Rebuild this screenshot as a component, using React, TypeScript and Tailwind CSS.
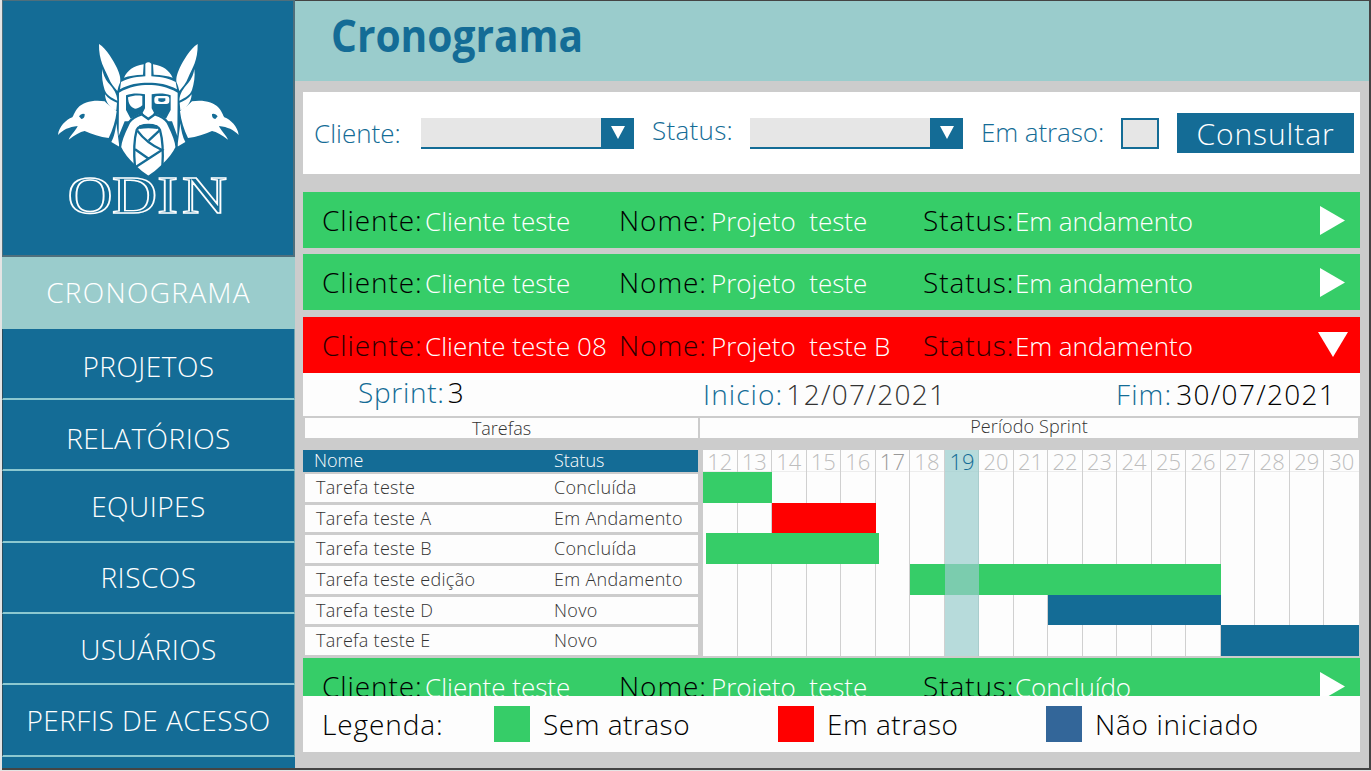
import { type ReactNode } from "react";

const SKY = "#146c96";

/* ---------- Logo ---------- */

function LogoHalf() {
  return (
    <g fill="#fff">
      <path d="M177 42C200 56 220 92 231 114C239 132 243 146 240 158C236 166 234 174 232 183C222 172 212 160 205 142C194 116 176 92 177 42Z" />
      <path d="M187 117C190 138 199 152 208 162C220 176 231 190 232 212C212 202 200 196 194 180C188 160 184 140 187 117Z" />
      <path d="M195 193C205 206 218 214 231 218L229 241C212 236 196 218 195 193Z" />
      <path d="M230 244C222 234 208 230 194 214C160 209 130 216 114 233C103 246 101 256 97 262C78 269 57 290 54 315C70 299 86 291 113 288C109 300 92 314 86 329C104 315 120 306 134 303C155 313 180 321 206 324C218 300 227 272 230 244Z" />
      <path d="M229 280L238 350L214 336C222 322 227 300 229 280Z" />
      <path d="M252 143C262 122 280 107 311 103L309 134C286 134 266 138 252 143Z" />
      <path fill={SKY} d="M117 259Q124 248 134 252Q135 266 124 267Z" />
    </g>
  );
}

function Logo() {
  return (
    <svg className="block h-[200px] w-[220px]" viewBox="0 0 660 600" aria-label="ODIN">
      <LogoHalf />
      <g transform="translate(650 0) scale(-1 1)">
        <LogoHalf />
      </g>
      <g fill="#fff">
        <path d="M240 178L243 156C268 143 296 140 316 139V101Q325 93 334 101V139C354 140 382 143 407 156L411 178C384 162 354 158 325 158C296 158 266 162 240 178Z" />
        <path d="M237 188C268 170 300 165 325 165C350 165 382 170 413 188L412 318L396 274H254L236 318Z" />
      </g>
      <g fill={SKY}>
        <path d="M258 196C275 189 298 189 315 193V235L308 248L316 262L300 252L272 266L258 240Z" />
        <path d="M392 196C375 189 352 189 335 193V235L342 248L334 262L350 252L378 266L392 240Z" />
      </g>
      <path fill="#fff" d="M264 202C280 196 295 196 307 198V226C300 233 291 236 285 236C272 233 265 222 264 202Z" />
      <rect x="343" y="198" width="45" height="24" rx="9" fill="#fff" />
      <path fill={SKY} d="M355 205H376V212Q366 219 355 213Z" />
      <path
        fill="#fff"
        stroke={SKY}
        strokeWidth="7"
        d="M325 267L305 253C290 258 276 264 268 276C256 300 242 325 240 352C250 374 266 392 284 408C296 420 310 432 325 441C340 432 354 420 366 408C384 392 400 374 410 352C408 325 394 300 382 276C374 264 360 258 345 253Z"
      />
      <g fill="none" stroke={SKY} strokeWidth="7">
        <path d="M285 412C281 370 283 325 290 300Q296 285 325 285Q354 285 360 300C367 325 370 370 367 412" />
        <path d="M292 302C308 324 334 346 366 360L286 412M358 302L326 332M285 358L326 386" />
      </g>
      <path fill={SKY} d="M298 286H352V297Q325 292 298 297Z" />
      <text
        transform="scale(1.2 1)"
        y="548"
        fontFamily="Liberation Serif, serif"
        fontSize="156"
        fill={SKY}
        stroke="#fff"
        strokeWidth="4.5"
      >
        <tspan x="69">O</tspan>
        <tspan x="180">D</tspan>
        <tspan x="293">I</tspan>
        <tspan x="355">N</tspan>
      </text>
    </svg>
  );
}

/* ---------- Sidebar ---------- */

const MENU = [
  { label: "PROJETOS", cls: "h-[71px] pt-[23px]" },
  { label: "RELATÓRIOS", cls: "h-[71px] pt-[24px]" },
  { label: "EQUIPES", cls: "h-[72px] pt-[21px]" },
  { label: "RISCOS", cls: "h-[71px] pt-[20px]" },
  { label: "USUÁRIOS", cls: "h-[71px] pt-[21px]" },
  { label: "PERFIS DE ACESSO", cls: "h-[72px] pt-[21px]" },
];

function Sidebar() {
  return (
    <aside className="flex w-[293px] shrink-0 flex-col bg-[#146c96] text-center text-[28px] leading-none tracking-[0.5px] text-white">
      <div className="h-[257px] border-t border-r-2 border-b-2 border-l border-[#4f6f7c] pt-[29px] pl-[37px]">
        <Logo />
      </div>
      <div className="h-[72px] bg-[#9acccc] pt-[21px] tracking-[1.3px]">CRONOGRAMA</div>
      {MENU.map((m) => (
        <div key={m.label} className={`border-r border-b-2 border-l border-r-[#6fa3ae] border-b-[#8cc8d0] border-l-[#2c4d5c] ${m.cls}`}>
          {m.label}
        </div>
      ))}
    </aside>
  );
}

/* ---------- Filters ---------- */

function Select() {
  return (
    <div className="flex h-[31px] w-[213px] border-b-2 border-[#146c96] bg-[#e6e6e6]">
      <div className="ml-auto flex w-[33px] justify-center bg-[#146c96] pt-2">
        <svg className="h-[13px] w-[14px]" viewBox="0 0 14 13">
          <path d="M0 0H14L7 13Z" fill="#fff" />
        </svg>
      </div>
    </div>
  );
}

function Filters() {
  return (
    <section className="flex h-[82px] bg-white text-[26px] leading-none text-[#146c96]">
      <span className="w-[118px] pt-[28px] pl-[11px]">Cliente:</span>
      <div className="pt-[26px]">
        <Select />
      </div>
      <span className="w-[116px] pt-[25px] pl-[18px] tracking-[0.3px]">Status:</span>
      <div className="pt-[26px]">
        <Select />
      </div>
      <span className="w-[158px] pt-[27px] pl-[18px] tracking-[-0.1px]">Em atraso:</span>
      <div className="mt-[26px] h-[31px] w-[38px] border-2 border-[#146c96] bg-[#e6e6e6]" />
      <button className="mt-[21px] ml-[18px] flex h-[40px] w-[177px] justify-center bg-[#146c96] pt-[6px] text-[30px] leading-none tracking-[0.9px] text-white">
        Consultar
      </button>
    </section>
  );
}

/* ---------- Projects ---------- */

type Project = { client: string; name: string; status: string; late?: boolean; open?: boolean };

function ProjectBar({ client, name, status, late, open }: Project) {
  const label = `text-[28px] tracking-[0.9px] ${late ? "text-[#2b0000]" : "text-black"}`;
  const value = "pt-[2px] text-[26px] text-white whitespace-pre";
  return (
    <div
      className={`grid h-[56px] shrink-0 grid-cols-[103px_194px_92px_212px_92px_302px_1fr] pt-[14px] pl-[19px] leading-none ${
        late ? "bg-[#ff0000]" : "bg-[#36cd68]"
      }`}
    >
      <span className={label}>Cliente:</span>
      <span className={value}>{client}</span>
      <span className={label}>Nome:</span>
      <span className={value}>{name}</span>
      <span className={label}>Status:</span>
      <span className={`${value} tracking-[-0.1px]`}>{status}</span>
      <svg className="-ml-px h-[30px] w-[32px]" viewBox="0 0 32 30">
        <path d={open ? "M2 1H32L17 26Z" : "M4 0V29L29 14.5Z"} fill="#fff" />
      </svg>
    </div>
  );
}

/* ---------- Sprint ---------- */

const TASKS = [
  ["Tarefa teste", "Concluída"],
  ["Tarefa teste A", "Em Andamento"],
  ["Tarefa teste B", "Concluída"],
  ["Tarefa teste edição", "Em Andamento"],
  ["Tarefa teste D", "Novo"],
  ["Tarefa teste E", "Novo"],
];

const BARS = [
  "row-start-1 col-start-1 col-span-2 bg-[#36cd68]",
  "row-start-2 col-start-3 col-span-3 bg-[#ff0000]",
  "row-start-3 col-start-1 col-span-5 bg-[#36cd68] ml-[3px] -mr-[3px]",
  "row-start-4 col-start-7 col-span-9 bg-[#36cd68]",
  "row-start-5 col-start-11 col-span-5 bg-[#146c96]",
  "row-start-6 col-start-16 col-span-4 bg-[#146c96]",
];

const TODAY = 19;
const DAYS = Array.from({ length: 19 }, (_, i) => 12 + i);

function Field({ name, children, cls }: { name: string; children: ReactNode; cls: string }) {
  return (
    <div className={`flex text-[28px] leading-none ${cls}`}>
      <span className="text-[#146c96]">{name}</span>
      {children}
    </div>
  );
}

function TaskTable() {
  return (
    <div className="w-[395px] text-[18px] leading-none text-[#333]">
      <div className="grid h-[22px] grid-cols-[240px_1fr] bg-[#146c96] pt-px pl-[11px] text-white">
        <span>Nome</span>
        <span>Status</span>
      </div>
      <div className="mt-[2px] ml-[2px] flex h-[181px] w-[393px] flex-col gap-[3px]">
        {TASKS.map(([name, status]) => (
          <div key={name} className="grid flex-1 grid-cols-[238px_1fr] items-center bg-[#fdfdfd] pb-[2px] pl-[11px] tracking-[0.3px]">
            <span>{name}</span>
            <span>{status}</span>
          </div>
        ))}
      </div>
    </div>
  );
}

function Gantt() {
  return (
    <div className="relative ml-[5px] h-[206px] w-[656px] bg-[#fdfdfd] text-center text-[22px] leading-none">
      <div className="grid h-full grid-cols-19">
        {DAYS.map((d) => (
          <div
            key={d}
            className={`h-full border-[#d0d0d0] ${d < 30 ? "border-r" : ""} ${d === 17 ? "text-[#999]" : "text-[#bdbdbd]"}`}
          >
            <div className="h-[22px] border-b border-[#ededed]">{d !== TODAY && d}</div>
          </div>
        ))}
      </div>
      <div className="absolute inset-x-0 top-[22px] bottom-0 grid grid-cols-19 grid-rows-6">
        {BARS.map((b) => (
          <div key={b} className={b} />
        ))}
      </div>
      <div className="absolute inset-0 grid grid-cols-19">
        <div className="col-start-8 bg-[#99cccc]/70 text-[#146c96]">{TODAY}</div>
      </div>
    </div>
  );
}

function Sprint() {
  return (
    <section className="shrink-0">
      <div className="flex h-[43px] bg-[#fdfdfd]">
        <Field name="Sprint:" cls="w-[400px] pl-[55px] pt-[5px] tracking-[0.7px]">
          <span className="pl-[3px] text-black">3</span>
        </Field>
        <Field name="Inicio:" cls="w-[413px] pt-[7px] tracking-[1.1px]">
          <span className="pl-[3px] tracking-[1.3px] text-[#333]">12/07/2021</span>
        </Field>
        <Field name="Fim:" cls="pt-[7px] tracking-[1.1px]">
          <span className="pl-[4px] tracking-[1.3px] text-black">30/07/2021</span>
        </Field>
      </div>
      <div className="mt-[2px] ml-[2px] flex gap-[2px] text-center text-[18px] leading-none text-[#333]">
        <div className="h-[20px] w-[393px] bg-[#fdfdfd] pt-[1px]">Tarefas</div>
        <div className="h-[20px] w-[658px] bg-[#fdfdfd]">
          <span className="relative -top-px tracking-[0.1px]">Período Sprint</span>
        </div>
      </div>
      <div className="mt-[12px] flex">
        <TaskTable />
        <Gantt />
      </div>
    </section>
  );
}

/* ---------- Legend ---------- */

function Legend() {
  return (
    <footer className="flex h-[56px] shrink-0 bg-[#fdfdfd] pt-[14px] text-[28px] leading-none tracking-[0.9px] text-black">
      <span className="w-[191px] pl-[19px]">Legenda:</span>
      <i className="-mt-1 h-[36px] w-[36px] bg-[#36cd68]" />
      <span className="w-[248px] pl-[13px] tracking-[0.5px]">Sem atraso</span>
      <i className="-mt-1 h-[36px] w-[36px] bg-[#ff0000]" />
      <span className="w-[232px] pl-[13px] tracking-[0.5px]">Em atraso</span>
      <i className="-mt-1 h-[36px] w-[36px] bg-[#336699]" />
      <span className="pl-[13px] tracking-[0.7px]">Não iniciado</span>
    </footer>
  );
}

export default function App() {
  return (
    <div className="flex h-[771px] w-[1371px] overflow-hidden bg-[#e4e4e4] pb-[1px] pl-[2px] font-['Open_Sans',sans-serif] font-light whitespace-nowrap">
      <div className="flex flex-1 border-t border-r-2 border-b-2 border-[#444]">
        <div className="-mt-px flex">
          <Sidebar />
        </div>
        <div className="flex h-[767px] flex-1 flex-col bg-[#cccccc]">
          <header className="h-[80px] bg-[#9acccc] pt-[12px] pl-[36px]">
            <h1 className="w-fit origin-left scale-x-[0.925] text-[44px] leading-none font-bold text-[#146c96]">Cronograma</h1>
          </header>
          <main className="mt-[11px] ml-[8px] flex h-[660px] w-[1057px] flex-col">
            <Filters />
            <div className="mt-[18px] flex h-[504px] flex-col overflow-hidden">
              <ProjectBar client="Cliente teste" name="Projeto  teste" status="Em andamento" />
              <div className="h-[6px] shrink-0" />
              <ProjectBar client="Cliente teste" name="Projeto  teste" status="Em andamento" />
              <div className="h-[7px] shrink-0" />
              <ProjectBar client="Cliente teste 08" name="Projeto  teste B" status="Em andamento" late open />
              <Sprint />
              <div className="h-[2px] shrink-0" />
              <ProjectBar client="Cliente teste" name="Projeto  teste" status="Concluído" />
            </div>
            <Legend />
          </main>
        </div>
      </div>
    </div>
  );
}
